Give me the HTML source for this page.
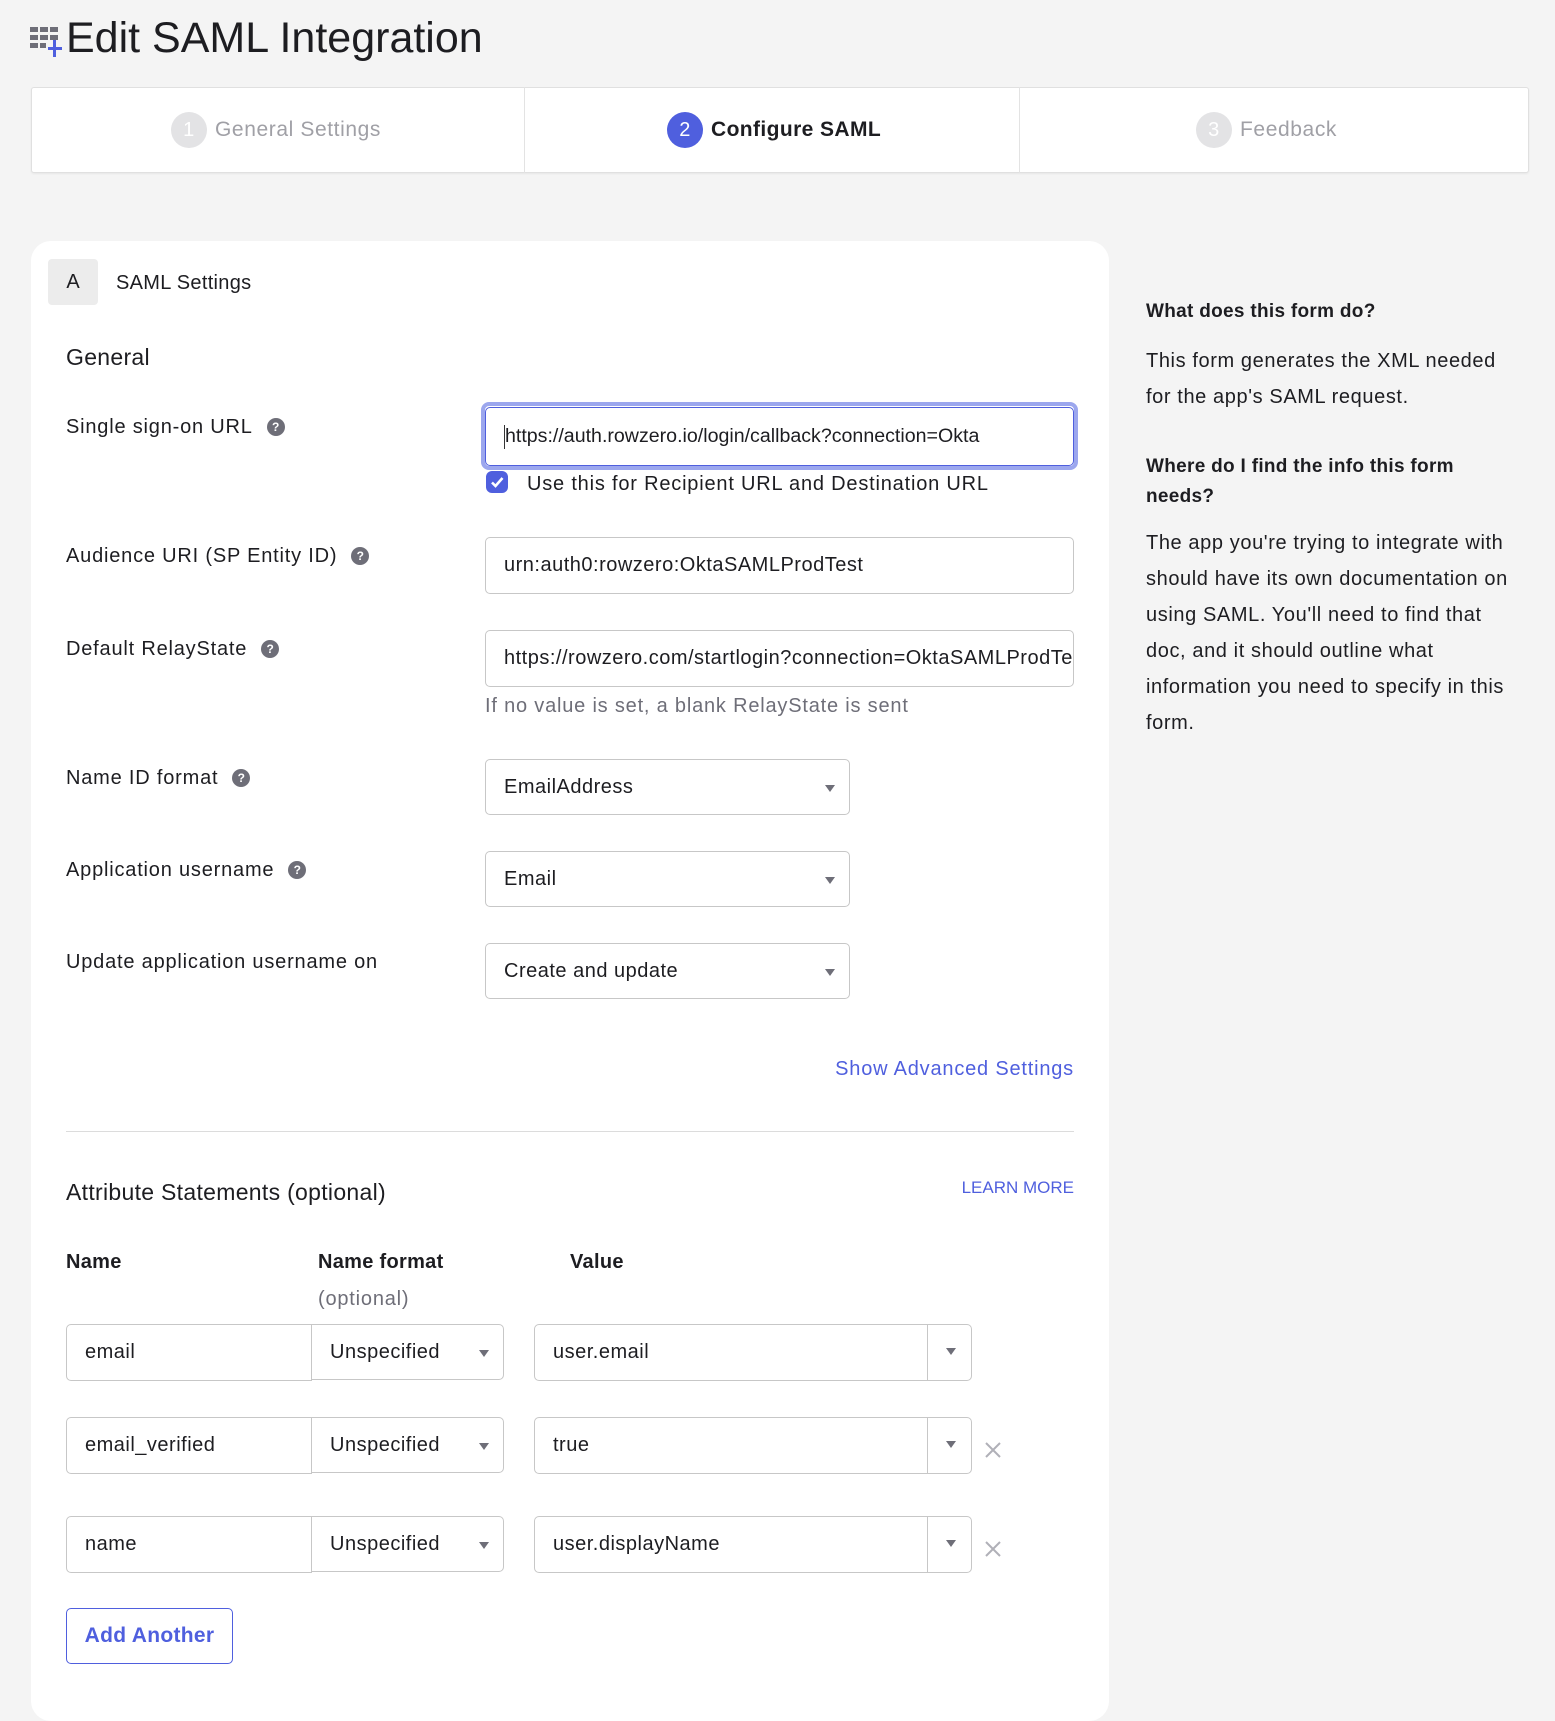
<!DOCTYPE html>
<html><head><meta charset="utf-8"><style>
*{box-sizing:border-box;margin:0;padding:0}
body{width:1555px;height:1686px;background:#f4f4f4;font-family:"Liberation Sans",sans-serif;color:#1d1d21;position:relative;overflow:hidden}
.a{position:absolute;white-space:nowrap}
.t{font-size:20px;line-height:24px;letter-spacing:0.8px}
.inp{position:absolute;background:#fff;border:1px solid #c7c7c7;border-radius:5px;font-size:20px;letter-spacing:0.5px;padding-left:18px;display:flex;align-items:center;overflow:hidden;white-space:nowrap;color:#1d1d21}
.q{display:inline-block;width:18px;height:18px;border-radius:50%;background:#6e6e78;color:#fff;font-size:12px;font-weight:bold;text-align:center;line-height:18px;vertical-align:2px;margin-left:14px;letter-spacing:0}
.arr{position:absolute;width:0;height:0;border-left:5px solid transparent;border-right:5px solid transparent;border-top:7px solid #6e6e78}
.circ{display:inline-block;width:36px;height:36px;border-radius:50%;text-align:center;line-height:36px;color:#fff;font-size:20px;margin-right:8px;vertical-align:middle}
.side{font-size:20px;line-height:36px;letter-spacing:0.6px}
</style></head><body>
<svg class="a" style="left:29px;top:26px" width="40" height="32" viewBox="0 0 40 32">
<g fill="#6e6e78"><rect x="1" y="1" width="8" height="5"/><rect x="11" y="1" width="8" height="5"/><rect x="21" y="1" width="8" height="5"/>
<rect x="1" y="9" width="8" height="5"/><rect x="11" y="9" width="8" height="5"/><rect x="21" y="9" width="8" height="5"/>
<rect x="1" y="17" width="8" height="5"/><rect x="11" y="17" width="6" height="5"/></g>
<rect x="24" y="14" width="3" height="17" fill="#4f5fde"/><rect x="19" y="21" width="14" height="3" fill="#4f5fde"/></svg>
<div class="a" style="left:66px;top:12px;font-size:43px;line-height:52px;color:#1d1d21">Edit SAML Integration</div>

<div class="a" style="left:31px;top:87px;width:1498px;height:86px;background:#fff;border:1px solid #e0e0e0;border-radius:3px;box-shadow:0 1px 2px rgba(0,0,0,.06)"></div>
<div class="a" style="left:524px;top:87px;width:1px;height:86px;background:#e3e3e3"></div>
<div class="a" style="left:1019px;top:87px;width:1px;height:86px;background:#e3e3e3"></div>
<div class="a" style="left:171px;top:111px;font-size:21px;color:#a0a0a6;line-height:38px;letter-spacing:0.6px"><span class="circ" style="background:#e3e3e5">1</span>General Settings</div>
<div class="a" style="left:667px;top:111px;font-size:21px;font-weight:bold;line-height:38px;letter-spacing:0.4px"><span class="circ" style="background:#4f5fde;font-weight:normal">2</span>Configure SAML</div>
<div class="a" style="left:1196px;top:111px;font-size:21px;color:#a0a0a6;line-height:38px;letter-spacing:0.6px"><span class="circ" style="background:#e3e3e5">3</span>Feedback</div>

<div class="a" style="left:31px;top:241px;width:1078px;height:1480px;background:#fff;border-radius:20px"></div>
<div class="a" style="left:48px;top:259px;width:50px;height:46px;background:#ececec;border-radius:4px;font-size:20px;text-align:center;line-height:46px">A</div>
<div class="a t" style="left:116px;top:271px;letter-spacing:0.3px">SAML Settings</div>
<div class="a" style="left:66px;top:344px;font-size:23px;letter-spacing:0.3px">General</div>

<div class="a t" style="left:66px;top:415px">Single sign-on URL<span class="q">?</span></div>
<div class="a" style="left:481px;top:402px;width:597px;height:68px;border:4px solid #9ca7ee;border-radius:8px"></div>
<div class="inp" style="left:485px;top:407px;width:589px;height:59px;border:1.5px solid #4f5fde;font-size:19.6px;letter-spacing:0"><span style="border-left:1px solid #333;height:24px;display:inline-block;vertical-align:middle"></span>https://auth.rowzero.io/login/callback?connection=Okta</div>
<div class="a" style="left:486px;top:471px;width:22px;height:22px;border-radius:6px;background:#4f5fde"><svg width="22" height="22"><path d="M6 11.5l3.5 3.5 7-8" stroke="#fff" stroke-width="2.6" fill="none"/></svg></div>
<div class="a t" style="left:527px;top:472px">Use this for Recipient URL and Destination URL</div>

<div class="a t" style="left:66px;top:544px">Audience URI (SP Entity ID)<span class="q">?</span></div>
<div class="inp" style="left:485px;top:537px;width:589px;height:57px">urn:auth0:rowzero:OktaSAMLProdTest</div>
<div class="a t" style="left:66px;top:637px">Default RelayState<span class="q">?</span></div>
<div class="inp" style="left:485px;top:630px;width:589px;height:57px">https://rowzero.com/startlogin?connection=OktaSAMLProdTest</div>
<div class="a t" style="left:485px;top:694px;color:#6e6e78">If no value is set, a blank RelayState is sent</div>

<div class="a t" style="left:66px;top:766px">Name ID format<span class="q">?</span></div>
<div class="inp" style="left:485px;top:759px;width:365px;height:56px">EmailAddress</div><div class="arr" style="left:825px;top:785px"></div>
<div class="a t" style="left:66px;top:858px">Application username<span class="q">?</span></div>
<div class="inp" style="left:485px;top:851px;width:365px;height:56px">Email</div><div class="arr" style="left:825px;top:877px"></div>
<div class="a t" style="left:66px;top:950px">Update application username on</div>
<div class="inp" style="left:485px;top:943px;width:365px;height:56px">Create and update</div><div class="arr" style="left:825px;top:969px"></div>

<div class="a t" style="right:481px;top:1057px;color:#4f5fde">Show Advanced Settings</div>
<div class="a" style="left:66px;top:1131px;width:1008px;height:1px;background:#dcdcdc"></div>
<div class="a" style="left:66px;top:1179px;font-size:23px;letter-spacing:0.3px">Attribute Statements (optional)</div>
<div class="a" style="right:481px;top:1178px;font-size:17px;color:#4f5fde">LEARN MORE</div>
<div class="a t" style="left:66px;top:1250px;font-weight:bold;letter-spacing:0.3px">Name</div>
<div class="a t" style="left:318px;top:1250px;font-weight:bold;letter-spacing:0.3px">Name format</div>
<div class="a t" style="left:570px;top:1250px;font-weight:bold;letter-spacing:0.3px">Value</div>
<div class="a t" style="left:318px;top:1287px;color:#6e6e78">(optional)</div>

<div class="inp" style="left:66px;top:1324px;width:246px;height:57px;border-radius:5px 0 0 5px">email</div>
<div class="inp" style="left:311px;top:1324px;width:193px;height:56px;border-radius:0 5px 5px 0">Unspecified</div><div class="arr" style="left:479px;top:1350px"></div>
<div class="inp" style="left:534px;top:1324px;width:438px;height:57px">user.email</div>
<div class="a" style="left:927px;top:1325px;width:1px;height:55px;background:#c7c7c7"></div><div class="arr" style="left:946px;top:1348px"></div>

<div class="inp" style="left:66px;top:1417px;width:246px;height:57px;border-radius:5px 0 0 5px">email_verified</div>
<div class="inp" style="left:311px;top:1417px;width:193px;height:56px;border-radius:0 5px 5px 0">Unspecified</div><div class="arr" style="left:479px;top:1443px"></div>
<div class="inp" style="left:534px;top:1417px;width:438px;height:57px">true</div>
<div class="a" style="left:927px;top:1418px;width:1px;height:55px;background:#c7c7c7"></div><div class="arr" style="left:946px;top:1441px"></div>
<svg class="a" style="left:984px;top:1441px" width="18" height="18"><path d="M2 2l14 14M16 2L2 16" stroke="#b0b0b8" stroke-width="2"/></svg>

<div class="inp" style="left:66px;top:1516px;width:246px;height:57px;border-radius:5px 0 0 5px">name</div>
<div class="inp" style="left:311px;top:1516px;width:193px;height:56px;border-radius:0 5px 5px 0">Unspecified</div><div class="arr" style="left:479px;top:1542px"></div>
<div class="inp" style="left:534px;top:1516px;width:438px;height:57px">user.displayName</div>
<div class="a" style="left:927px;top:1517px;width:1px;height:55px;background:#c7c7c7"></div><div class="arr" style="left:946px;top:1540px"></div>
<svg class="a" style="left:984px;top:1540px" width="18" height="18"><path d="M2 2l14 14M16 2L2 16" stroke="#b0b0b8" stroke-width="2"/></svg>

<div class="a" style="left:66px;top:1608px;width:167px;height:56px;border:1.5px solid #4f5fde;border-radius:5px;color:#4f5fde;font-size:21px;font-weight:bold;text-align:center;line-height:53px;letter-spacing:0.3px">Add Another</div>

<div class="a" style="left:1146px;top:301px;font-size:19px;font-weight:bold;letter-spacing:0.3px">What does this form do?</div>
<div class="a side" style="left:1146px;top:343px">This form generates the XML needed<br>for the app's SAML request.</div>
<div class="a" style="left:1146px;top:452px;font-size:19px;font-weight:bold;line-height:30px;letter-spacing:0.3px">Where do I find the info this form<br>needs?</div>
<div class="a side" style="left:1146px;top:525px">The app you're trying to integrate with<br>should have its own documentation on<br>using SAML. You'll need to find that<br>doc, and it should outline what<br>information you need to specify in this<br>form.</div>
</body></html>
